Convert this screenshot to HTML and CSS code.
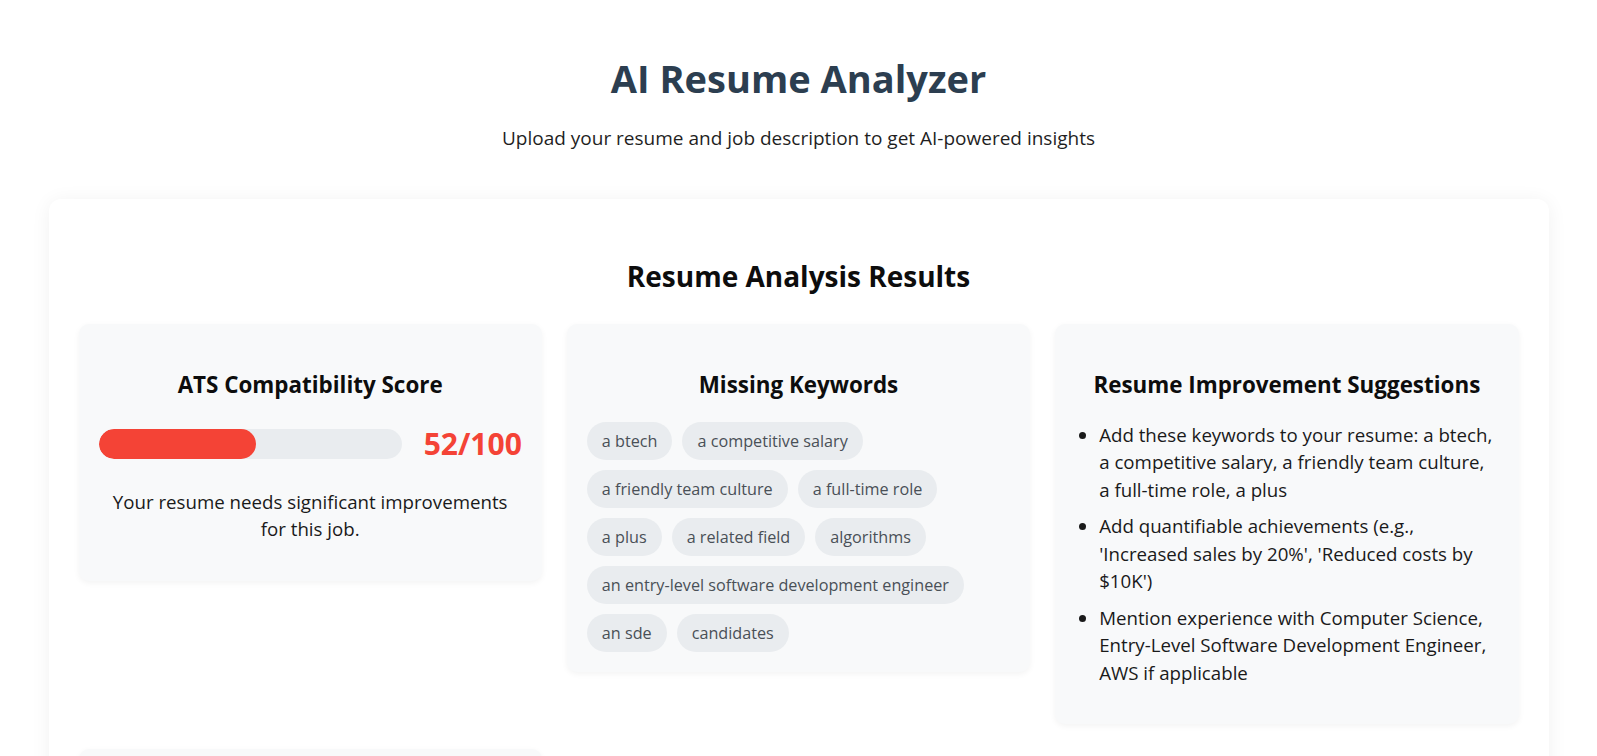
FILE: index.html
```html
<!DOCTYPE html>
<html lang="en">
<head>
<meta charset="utf-8">
<title>AI Resume Analyzer</title>
<link rel="stylesheet" href="styles.css">
</head>
<body>
<div class="page">
  <header class="hero">
    <h1 class="hero-title">AI Resume Analyzer</h1>
    <p class="hero-sub">Upload your resume and job description to get AI-powered insights</p>
  </header>

  <section class="results">
    <h2 class="results-title">Resume Analysis Results</h2>
    <div class="grid">
      <div class="card card-score">
        <h3 class="card-title">ATS Compatibility Score</h3>
        <div class="score-row">
          <div class="bar"><div class="bar-fill" style="width:52%"></div></div>
          <div class="score">52/100</div>
        </div>
        <p class="score-note">Your resume needs significant improvements for this job.</p>
      </div>

      <div class="card">
        <h3 class="card-title">Missing Keywords</h3>
        <div class="chips">
          <span class="chip">a btech</span>
          <span class="chip">a competitive salary</span>
          <span class="chip">a friendly team culture</span>
          <span class="chip">a full-time role</span>
          <span class="chip">a plus</span>
          <span class="chip">a related field</span>
          <span class="chip">algorithms</span>
          <span class="chip">an entry-level software development engineer</span>
          <span class="chip">an sde</span>
          <span class="chip">candidates</span>
        </div>
      </div>

      <div class="card">
        <h3 class="card-title">Resume Improvement Suggestions</h3>
        <ul class="tips">
          <li>Add these keywords to your resume: a btech, a competitive salary, a friendly team culture, a full-time role, a plus</li>
          <li>Add quantifiable achievements (e.g.,<br>'Increased sales by 20%', 'Reduced costs by $10K')</li>
          <li>Mention experience with Computer Science, Entry-Level Software Development Engineer, AWS if applicable</li>
        </ul>
      </div>

      <div class="card card-next"></div>
    </div>
  </section>
</div>
</body>
</html>
```

FILE: styles.css
```css
* { box-sizing: border-box; }

html, body {
  margin: 0;
  background: #ffffff;
}

body {
  font-family: "Open Sans", "Noto Sans", sans-serif;
  color: #1a1a1a;
  font-size: 18.7px;
}

.page {
  max-width: 1500px;
  margin: 0 auto;
  padding-top: 54px;
}

.hero {
  text-align: center;
}

.hero-title {
  margin: 0;
  font-size: 38px;
  line-height: 48px;
  font-weight: 700;
  color: #2c3e50;
}

.hero-sub {
  margin: 22px 0 0;
  font-size: 19px;
  line-height: 28px;
  color: #1f1f1f;
}

.results {
  margin-top: 47px;
  background: #fff;
  border-radius: 12px;
  box-shadow: 0 2px 20px rgba(0, 0, 0, 0.06);
  padding: 30px;
  min-height: 700px;
}

.results-title {
  margin: 30px 0 30px;
  text-align: center;
  font-size: 28px;
  line-height: 34.5px;
  font-weight: 700;
  color: #0d0d0d;
}

.grid {
  display: grid;
  grid-template-columns: repeat(3, 1fr);
  gap: 25px;
  align-items: start;
}

.card {
  background: #f8f9fa;
  border-radius: 10px;
  box-shadow: 0 2px 6px rgba(0, 0, 0, 0.05);
  padding: 20px;
}

.card-title {
  margin: 28px 0 24px;
  text-align: center;
  font-size: 22.4px;
  line-height: 26px;
  font-weight: 700;
  color: #0d0d0d;
}

.score-row {
  display: flex;
  align-items: center;
  gap: 22px;
  margin-top: 27px;
}

.bar {
  flex: 1;
  height: 30px;
  background: #e9ecef;
  border-radius: 15px;
  overflow: hidden;
}

.bar-fill {
  height: 100%;
  background: #f44336;
  border-radius: 15px;
}

.score {
  font-size: 30px;
  line-height: 38px;
  font-weight: 700;
  color: #f44336;
}

.score-note {
  margin: 25px 8px 18px;
  text-align: center;
  line-height: 27.5px;
}

.chips {
  display: flex;
  flex-wrap: wrap;
  gap: 10px;
}

.chip {
  display: inline-block;
  padding: 8px 15px;
  font-size: 16.2px;
  line-height: 22px;
  background: #e9ecef;
  color: #495057;
  border-radius: 20px;
}

.tips {
  margin: -1px 0 18px;
  padding-left: 24px;
  line-height: 27.5px;
}

.tips li {
  margin-bottom: 9px;
}

.card-next {
  height: 60px;
}
```
